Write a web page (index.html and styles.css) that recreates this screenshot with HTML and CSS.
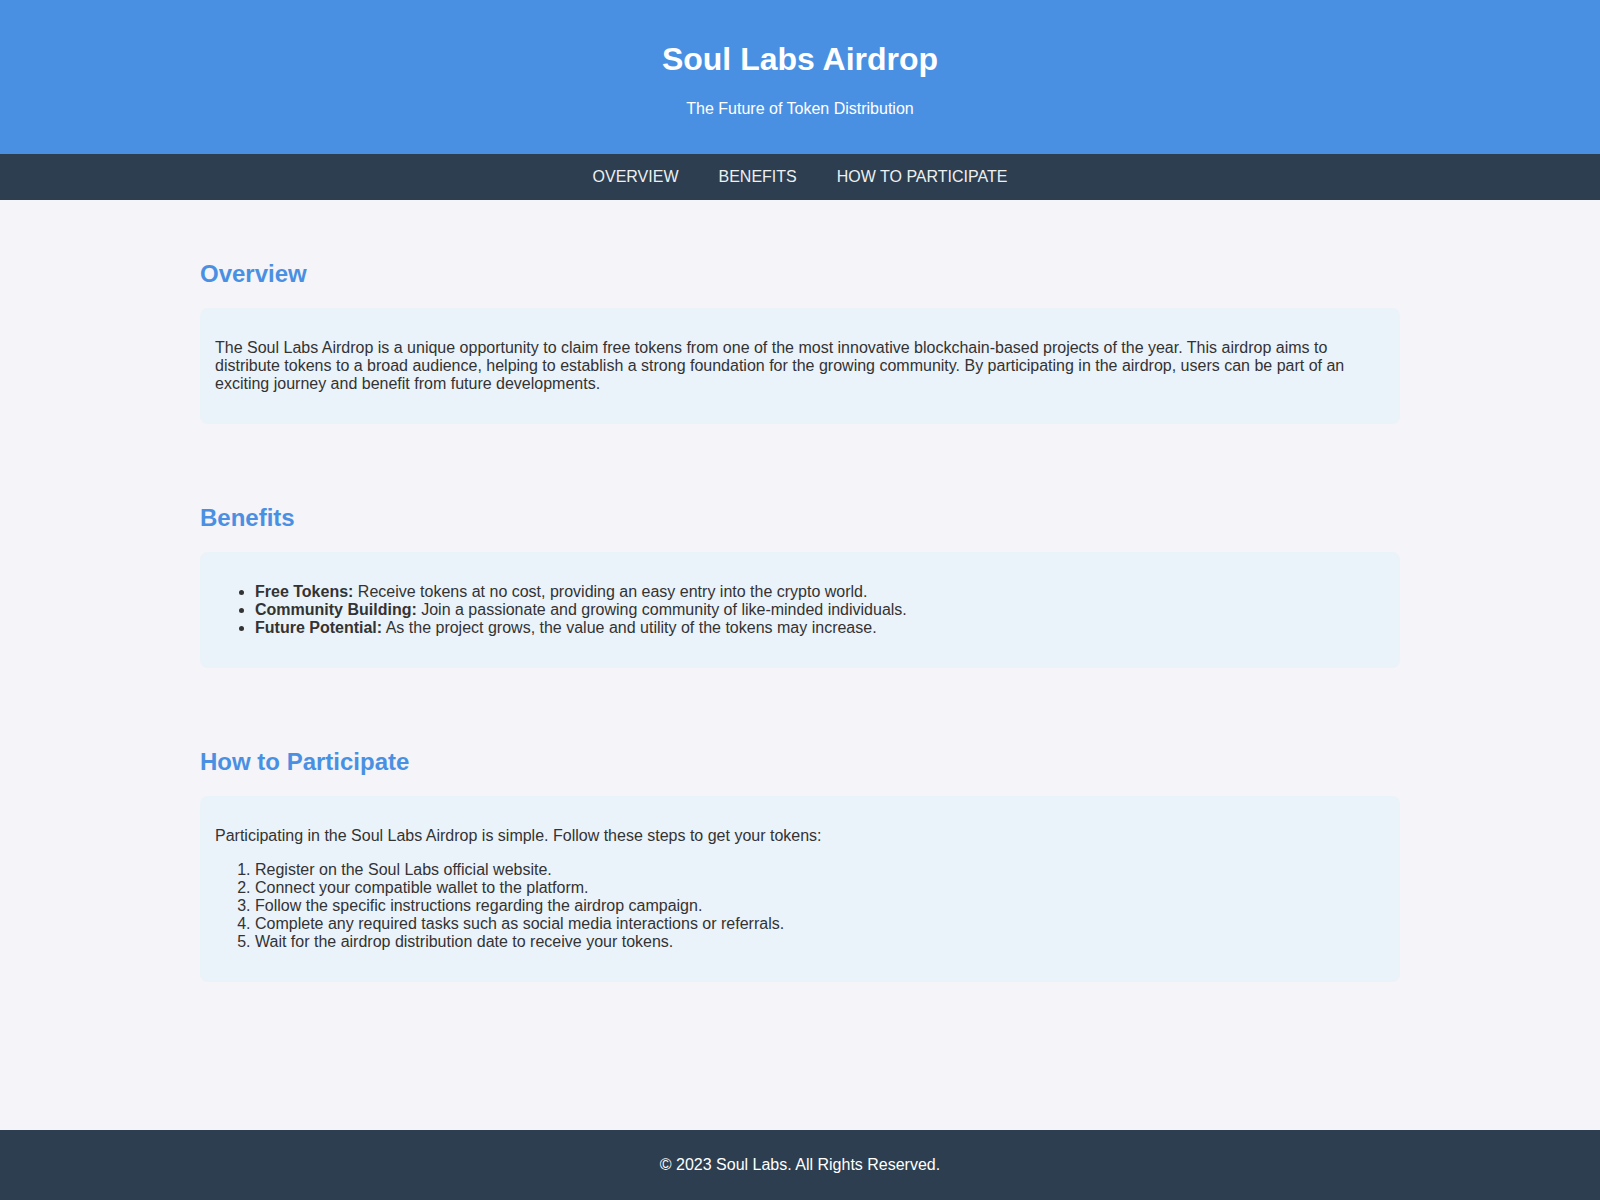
FILE: index.html
```html
<!DOCTYPE html>
<html lang="en">
<head>
<meta charset="UTF-8">
<title>Soul Labs Airdrop</title>
<link rel="stylesheet" href="styles.css">
</head>
<body>
<header class="site-header">
  <h1 class="site-title">Soul Labs Airdrop</h1>
  <p class="site-subtitle">The Future of Token Distribution</p>
</header>
<nav class="site-nav">
  <a href="#overview">OVERVIEW</a>
  <a href="#benefits">BENEFITS</a>
  <a href="#participate">HOW TO PARTICIPATE</a>
</nav>
<main class="content">
  <section class="section" id="overview">
    <h2 class="section-title">Overview</h2>
    <div class="card">
      <p>The Soul Labs Airdrop is a unique opportunity to claim free tokens from one of the most innovative blockchain-based projects of the year. This airdrop aims to distribute tokens to a broad audience, helping to establish a strong foundation for the growing community. By participating in the airdrop, users can be part of an exciting journey and benefit from future developments.</p>
    </div>
  </section>
  <section class="section" id="benefits">
    <h2 class="section-title">Benefits</h2>
    <div class="card">
      <ul>
        <li><strong>Free Tokens:</strong> Receive tokens at no cost, providing an easy entry into the crypto world.</li>
        <li><strong>Community Building:</strong> Join a passionate and growing community of like-minded individuals.</li>
        <li><strong>Future Potential:</strong> As the project grows, the value and utility of the tokens may increase.</li>
      </ul>
    </div>
  </section>
  <section class="section" id="participate">
    <h2 class="section-title">How to Participate</h2>
    <div class="card">
      <p>Participating in the Soul Labs Airdrop is simple. Follow these steps to get your tokens:</p>
      <ol>
        <li>Register on the Soul Labs official website.</li>
        <li>Connect your compatible wallet to the platform.</li>
        <li>Follow the specific instructions regarding the airdrop campaign.</li>
        <li>Complete any required tasks such as social media interactions or referrals.</li>
        <li>Wait for the airdrop distribution date to receive your tokens.</li>
      </ol>
    </div>
  </section>
</main>
<footer class="site-footer">
  <p>&copy; 2023 Soul Labs. All Rights Reserved.</p>
</footer>
</body>
</html>
```

FILE: styles.css
```css
* { box-sizing: border-box; }
html, body { margin: 0; padding: 0; }
body {
  font-family: "Liberation Sans", Arial, sans-serif;
  font-size: 16px;
  color: #333;
  background: #f4f4f9;
  min-height: 100vh;
  display: flex;
  flex-direction: column;
}
.site-header {
  background: #4a90e2;
  color: #fff;
  text-align: center;
  padding: 20px 0;
}
.site-title {
  font-size: 32px;
  margin: 21.44px 0;
}
.site-subtitle {
  margin: 16px 0;
}
.site-nav {
  background: #2c3e50;
  display: flex;
  justify-content: center;
  gap: 40px;
  padding: 14px 0;
  height: 46px;
}
.site-nav a {
  color: #ecf0f1;
  text-decoration: none;
  line-height: 18px;
}
.content {
  flex: 1;
  width: 100%;
  max-width: 1200px;
  margin: 0 auto;
  padding-top: 40px;
  display: flex;
  flex-direction: column;
  gap: 40px;
}
.section {
  padding: 20px 0;
}
.section-title {
  color: #4a90e2;
  font-size: 24px;
  margin: 0 0 20px;
}
.card {
  background: #eaf2fa;
  border-radius: 8px;
  padding: 15px;
}
.card p { margin: 16px 0; }
.card ul, .card ol { margin: 16px 0; padding-left: 40px; }
.site-footer {
  background: #2c3e50;
  color: #fff;
  text-align: center;
  padding: 26px 0;
}
.site-footer p { margin: 0; }
```
